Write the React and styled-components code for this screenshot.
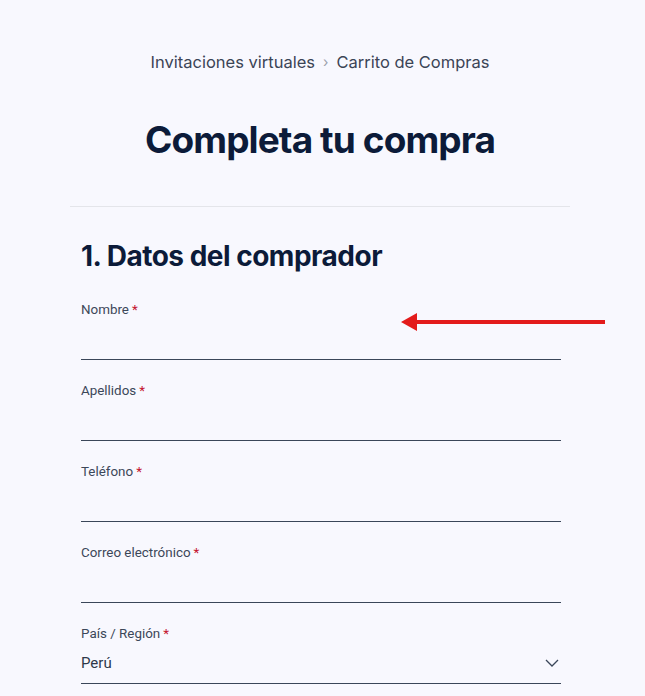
import React from "react";
import styled, { createGlobalStyle } from "styled-components";

const GlobalStyle = createGlobalStyle`
  body {
    margin: 0;
    background: #f8f8fe;
    font-family: Inter, "Noto Sans", sans-serif;
  }
`;

const Page = styled.div`
  width: 500px;
  margin: 0 70px;
  position: relative;
`;

const Breadcrumb = styled.nav`
  display: flex;
  justify-content: center;
  align-items: center;
  gap: 8px;
  padding-top: 50px;
  font-size: 16.5px;
  line-height: 24px;
  color: #3b4456;
`;

const Sep = styled.span`
  color: #9aa0ab;
  font-size: 14px;
`;

const Title = styled.h1`
  margin: 42px 0 0;
  text-align: center;
  font-size: 37px;
  line-height: 48px;
  font-weight: 700;
  letter-spacing: -0.9px;
  color: #0c1b39;
`;

const Divider = styled.hr`
  border: 0;
  border-top: 1px solid #e4e5ea;
  margin: 42px 0 0;
`;

const Form = styled.div`
  padding: 0 9px 0 11px;
`;

const SectionTitle = styled.h2`
  margin: 31px 0 5px;
  font-size: 28px;
  line-height: 36px;
  font-weight: 700;
  letter-spacing: -0.5px;
  color: #0c1b39;
`;

const Field = styled.div`
  height: 81px;
  display: flex;
  flex-direction: column;
  border-bottom: 1px solid #3a4659;
  box-sizing: border-box;
  padding-top: 22px;
`;

const Label = styled.label`
  font-family: Roboto, "Liberation Sans", sans-serif;
  font-size: 13.4px;
  line-height: 18px;
  color: #3c4759;
`;

const Req = styled.span`
  color: #c41230;
  margin-left: 3px;
`;

const SelectRow = styled.div`
  display: flex;
  justify-content: space-between;
  align-items: center;
  margin-top: 11px;
  padding-right: 2px;
  font-family: Roboto, "Liberation Sans", sans-serif;
  font-size: 15px;
  color: #2e384a;
`;

const Arrow = styled.svg`
  position: absolute;
  left: 330px;
  top: 312px;
`;

const fields = ["Nombre", "Apellidos", "Teléfono", "Correo electrónico"];

export default function App() {
  return (
    <>
      <GlobalStyle />
      <Page>
        <Breadcrumb>
          <span>Invitaciones virtuales</span>
          <Sep>›</Sep>
          <span>Carrito de Compras</span>
        </Breadcrumb>
        <Title>Completa tu compra</Title>
        <Divider />
        <Form>
          <SectionTitle>1. Datos del comprador</SectionTitle>
          {fields.map(f => (
            <Field key={f}>
              <Label>
                {f}
                <Req>*</Req>
              </Label>
            </Field>
          ))}
          <Field>
            <Label>
              País / Región<Req>*</Req>
            </Label>
            <SelectRow>
              <span>Perú</span>
              <svg width="14" height="8" viewBox="0 0 14 8">
                <path d="M1 1l6 6 6-6" fill="none" stroke="#3a4659" strokeWidth="1.3" />
              </svg>
            </SelectRow>
          </Field>
        </Form>
        <Arrow width="206" height="20" viewBox="0 0 206 20">
          <path d="M1 10L17 1v7h188v4H17V19z" fill="#e31b1b" />
        </Arrow>
      </Page>
    </>
  );
}
